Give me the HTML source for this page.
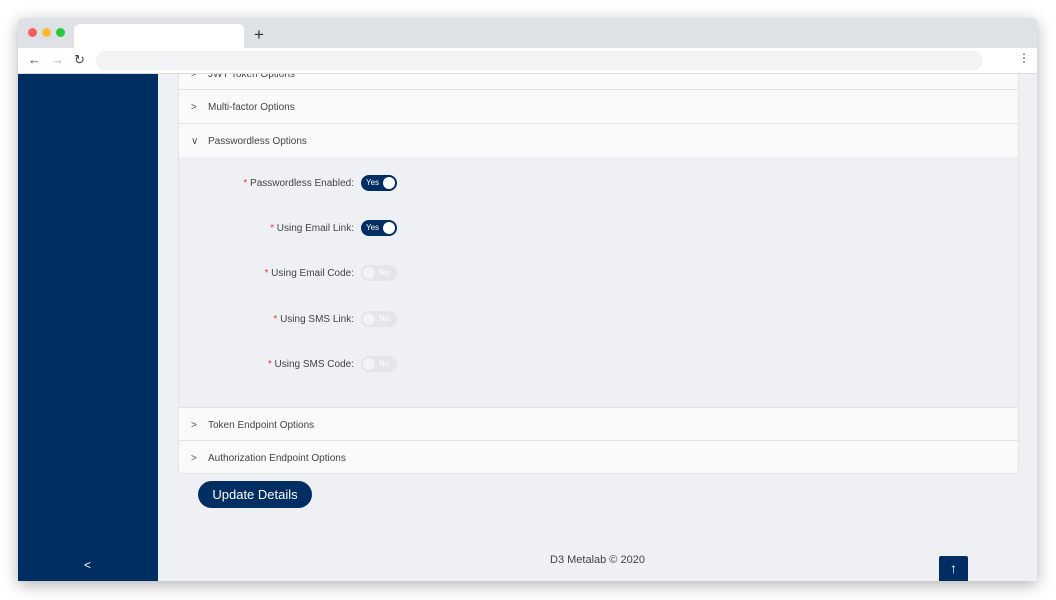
<!DOCTYPE html>
<html><head><style>
*{margin:0;padding:0;box-sizing:border-box}
body{width:1056px;height:600px;background:#fff;position:relative;overflow:hidden;font-family:"Liberation Sans",sans-serif}
.win{position:absolute;left:18px;top:18px;width:1019px;height:563px;box-shadow:0 4px 16px rgba(0,0,0,.3);background:#eef0f4;overflow:hidden;border-radius:4px 4px 0 0}
.tabbar{position:absolute;left:0;top:0;width:100%;height:30px;background:#dee1e6;z-index:5}
.dot{position:absolute;top:10px;width:9px;height:9px;border-radius:50%}
.tab{position:absolute;left:56px;top:6px;width:170px;height:24px;background:#fff;border-radius:6px 6px 0 0}
.plus{position:absolute;left:236px;top:7px;font-size:17px;color:#333}
.tool{position:absolute;left:0;top:30px;width:100%;height:26px;background:#fff;border-bottom:1px solid #ddd;z-index:5}
.url{position:absolute;left:78px;top:3px;width:887px;height:19px;background:#f1f3f4;border-radius:10px}
.side{position:absolute;left:0;top:56px;width:140px;height:507px;background:#002d62}
.panel{position:absolute;left:160px;top:56px;width:841px;height:400px;background:#fafafa;border:1px solid #e2e3e6;border-top:none;border-radius:0 0 4px 4px;overflow:hidden}
.row{position:absolute;left:0;width:100%;border-bottom:1px solid #e2e3e6;font-size:10px;color:#444;padding-left:29px}
.row span.ch{position:absolute;left:12px;font-size:10px;color:#555}
.body{position:absolute;left:0;width:100%;background:#eff0f4;border-bottom:1px solid #e2e3e6}
.f{position:absolute;right:664px;font-size:10px;color:#444;white-space:nowrap}
.f b{color:#e33;font-weight:normal}
.tg{position:absolute;left:182px;width:36px;height:16px;border-radius:8px}
.on{background:#002d62}
.on:after{content:"";position:absolute;right:2px;top:2px;width:12px;height:12px;border-radius:50%;background:#fff}
.on i{position:absolute;left:5px;top:3px;font-style:normal;font-size:8px;color:#fff}
.off{background:#e4e5e8}
.off:after{content:"";position:absolute;left:2px;top:2px;width:12px;height:12px;border-radius:50%;background:#f3f3f5}
.off i{position:absolute;left:18px;top:3px;font-style:normal;font-size:8px;color:#fff}
.btn{position:absolute;left:180px;top:463px;width:114px;height:27px;background:#002d62;border-radius:14px;color:#fff;font-size:13px;text-align:center;line-height:27px}
.foot{position:absolute;left:532px;top:536px;font-size:11px;color:#444}
.up{position:absolute;left:921px;top:538px;width:29px;height:25px;background:#002d62;border-radius:2px 2px 0 0;color:#fff;text-align:center;font-size:14px;line-height:25px}
</style></head><body>
<div class="win">
<div class="tabbar"><div class="dot" style="left:10px;background:#fe5f57"></div><div class="dot" style="left:24px;background:#febc2e"></div><div class="dot" style="left:38px;background:#28c840"></div><div class="tab"></div><div class="plus">+</div></div>
<div class="tool"><span style="position:absolute;left:10px;top:4px;font-size:13px;color:#444">←</span><span style="position:absolute;left:33px;top:4px;font-size:13px;color:#aaa">→</span><span style="position:absolute;left:56px;top:4px;font-size:13px;color:#444">↻</span><div class="url"></div><span style="position:absolute;left:1000px;top:3px;font-size:12px;color:#444">⋮</span></div>
<div class="side"><span style="position:absolute;left:66px;top:484px;color:#fff;font-size:12px">&lt;</span></div>
<div class="panel">
<div class="row" style="top:-18px;height:34px;line-height:37px"><span class="ch">&gt;</span>JWT Token Options</div>
<div class="row" style="top:16px;height:34px;line-height:36px"><span class="ch">&gt;</span>Multi-factor Options</div>
<div class="row" style="top:50px;height:34px;line-height:35px"><span class="ch">∨</span>Passwordless Options</div>
<div class="body" style="top:83px;height:251px">
<div class="f" style="top:21px"><b>*</b> Passwordless Enabled:</div><div class="tg on" style="top:18px"><i>Yes</i></div>
<div class="f" style="top:66px"><b>*</b> Using Email Link:</div><div class="tg on" style="top:63px"><i>Yes</i></div>
<div class="f" style="top:111px"><b>*</b> Using Email Code:</div><div class="tg off" style="top:108px"><i>No</i></div>
<div class="f" style="top:157px"><b>*</b> Using SMS Link:</div><div class="tg off" style="top:154px"><i>No</i></div>
<div class="f" style="top:202px"><b>*</b> Using SMS Code:</div><div class="tg off" style="top:199px"><i>No</i></div>
</div>
<div class="row" style="top:334px;height:33px;line-height:36px"><span class="ch">&gt;</span>Token Endpoint Options</div>
<div class="row" style="top:367px;height:33px;line-height:36px;border:none"><span class="ch">&gt;</span>Authorization Endpoint Options</div>
</div>
<div class="btn">Update Details</div>
<div class="foot">D3 Metalab © 2020</div>
<div class="up">↑</div>
</div>
</body></html>
